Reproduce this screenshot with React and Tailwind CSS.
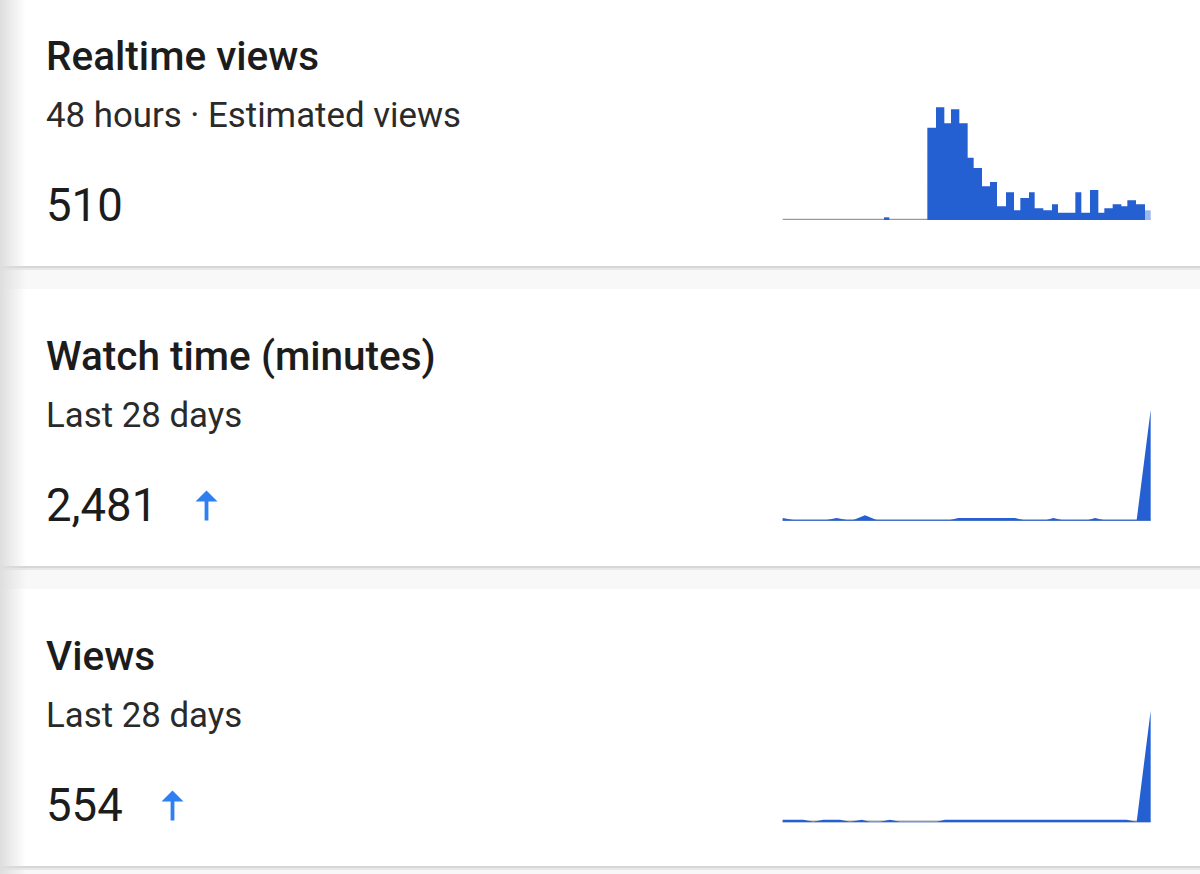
import React from "react";

const BLUE = "#2560d2";

function UpArrow() {
  return (
    <svg width="23" height="31" viewBox="0 0 23 31" className="ml-[38px] mt-[7px]">
      <polygon points="0.5,11.5 11.5,0.5 22.5,11.5" fill="#2f7ff3" />
      <rect x="9.6" y="10" width="3.8" height="20.5" fill="#2f7ff3" />
    </svg>
  );
}

const bars = [
  [472, 498, 113], [498, 523, 52], [523, 543, 100], [543, 568, 58], [568, 593, 100],
  [593, 611, 203], [611, 636, 234], [636, 660, 289], [660, 681, 276], [681, 708, 349],
  [708, 732, 307], [732, 751, 361], [751, 777, 324], [777, 794, 307], [794, 820, 355],
  [820, 846, 361], [846, 864, 343], [864, 916, 368], [916, 934, 307], [934, 960, 368],
  [960, 985, 300], [985, 1003, 368], [1003, 1028, 355], [1028, 1054, 343], [1054, 1072, 349],
  [1072, 1098, 331], [1098, 1125, 343],
];

const barPath =
  "M472 390 " + bars.map(([a, b, t]) => `L${a} ${t} L${b} ${t}`).join(" ") + " L1125 390 Z";

function BarChart() {
  return (
    <svg width="400" height="150" viewBox="0 0 1200 450">
      <line x1="38" y1="388" x2="1142" y2="388" stroke="#9a9a9a" strokeWidth="4" />
      <rect x="342" y="382" width="16" height="8" fill={BLUE} />
      <path d={barPath} fill={BLUE} />
      <rect x="1125" y="361" width="17" height="29" fill="#9db6ee" />
    </svg>
  );
}

function WatchChart() {
  return (
    <svg width="400" height="150" viewBox="0 0 1200 450">
      <line x1="38" y1="390" x2="1142" y2="390" stroke="#9a9a9a" strokeWidth="5" />
      <path
        d="M38 392 L38 384 L70 390 L170 390 L200 384 L230 390 L250 390 L285 376 L320 390 L540 390 L565 384 L735 384 L760 390 L830 390 L850 384 L875 390 L955 390 L975 384 L1000 390 L1100 390 L1142 60 L1142 392 Z"
        fill={BLUE}
      />
    </svg>
  );
}

function ViewsChart() {
  return (
    <svg width="400" height="150" viewBox="0 0 1200 450">
      <line x1="38" y1="394" x2="1142" y2="394" stroke="#a8a8a8" strokeWidth="5" />
      <path
        d="M38 397 L38 389 L100 389 L130 395 L160 389 L210 389 L240 395 L275 389 L300 395 L330 395 L360 389 L390 395 L500 395 L525 389 L1070 389 L1100 395 L1142 62 L1142 397 L1100 397 Z"
        fill={BLUE}
      />
    </svg>
  );
}

function Card({ title, subtitle, value, arrow, chart, first }) {
  return (
    <div>
      <div className={`flex justify-between bg-white ${first ? "h-[266px]" : "h-[277px]"}`}>
        <div className={`pl-[46px] ${first ? "pt-[36px]" : "pt-[47px]"}`}>
          <div className="text-[40.5px] leading-[40px] font-medium text-[#1c1c1c] whitespace-nowrap">
            {title}
          </div>
          <div className="mt-[22px] text-[34.8px] leading-[35px] text-[#2a2a2a] whitespace-nowrap">
            {subtitle}
          </div>
          <div className="mt-[50px] flex items-start">
            <div className="text-[45.5px] leading-[46px] text-[#1c1c1c]">{value}</div>
            {arrow && <UpArrow />}
          </div>
        </div>
        <div className={`mr-[30px] ${first ? "mt-[90px]" : "mt-[101px]"}`}>{chart}</div>
      </div>
      <div className="h-[2px] bg-[#d6d6d6]" />
      <div className="h-[2px] bg-[#e8e8e8]" />
      <div className="h-[19px] bg-[#f8f8f8]" />
    </div>
  );
}

export default function App() {
  return (
    <div
      className="relative w-[1200px] h-[874px] overflow-hidden bg-white"
      style={{ fontFamily: "Roboto, 'Noto Sans', 'Liberation Sans', sans-serif" }}
    >
      <Card
        first
        title="Realtime views"
        subtitle="48 hours · Estimated views"
        value="510"
        chart={<BarChart />}
      />
      <Card
        title="Watch time (minutes)"
        subtitle="Last 28 days"
        value="2,481"
        arrow
        chart={<WatchChart />}
      />
      <Card
        title="Views"
        subtitle="Last 28 days"
        value="554"
        arrow
        chart={<ViewsChart />}
      />
      <div className="pointer-events-none absolute left-0 top-0 h-full w-[26px] bg-gradient-to-r from-[#dedede] to-transparent" />
    </div>
  );
}
